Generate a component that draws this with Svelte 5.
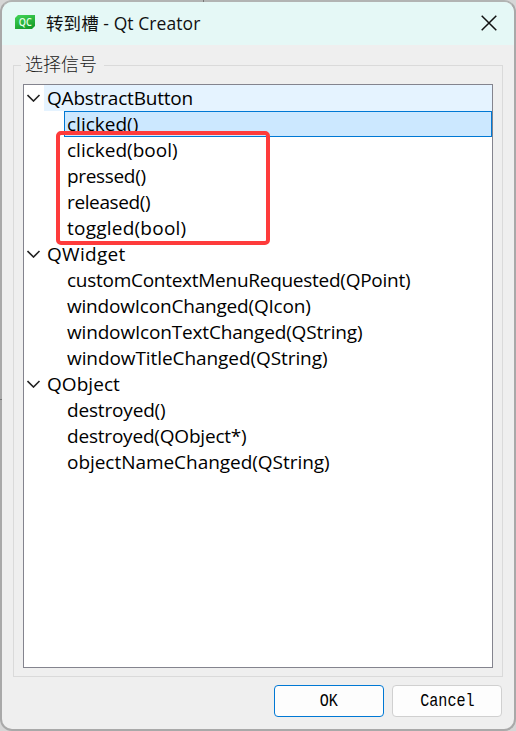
<script lang="ts">
    // spacing is the letter spacing of the label, in px
    type Signal = { name: string; spacing: number };
    type Group = { name: string; spacing: number; signals: Signal[] };

    // Classes and the signals they offer
    const groups: Group[] = [
        {
            name: 'QAbstractButton',
            spacing: -0.2,
            signals: [
                { name: 'clicked()', spacing: 0 },
                { name: 'clicked(bool)', spacing: 0 },
                { name: 'pressed()', spacing: -0.33 },
                { name: 'released()', spacing: -0.38 },
                { name: 'toggled(bool)', spacing: 0.23 }
            ]
        },
        {
            name: 'QWidget',
            spacing: 0.3,
            signals: [
                { name: 'customContextMenuRequested(QPoint)', spacing: -0.27 },
                { name: 'windowIconChanged(QIcon)', spacing: -0.2 },
                { name: 'windowIconTextChanged(QString)', spacing: -0.17 },
                { name: 'windowTitleChanged(QString)', spacing: -0.08 }
            ]
        },
        {
            name: 'QObject',
            spacing: 0.06,
            signals: [
                { name: 'destroyed()', spacing: -0.17 },
                { name: 'destroyed(QObject*)', spacing: -0.2 },
                { name: 'objectNameChanged(QString)', spacing: -0.04 }
            ]
        }
    ];

    let selected: string = $state('clicked()');
    let hovered: string = $state('QAbstractButton');
    let collapsed: Record<string, boolean> = $state({});
</script>

<div class="desktop">
    <div class="dialog">
        <header class="titlebar">
            <svg class="logo" width="20" height="14" viewBox="0 0 20 14">
                <defs>
                    <linearGradient id="green" x1="0" y1="0" x2="0.5" y2="1">
                        <stop offset="0" stop-color="#43d558" />
                        <stop offset="1" stop-color="#17a02c" />
                    </linearGradient>
                </defs>
                <path d="M3 0H20V11L17 14H0V3Z" fill="url(#green)" />
                <text x="10.2" y="11" text-anchor="middle" textLength="13" lengthAdjust="spacingAndGlyphs">QC</text>
            </svg>
            <h1>转到槽 - Qt Creator</h1>
            <button class="close" aria-label="Close">
                <svg width="16" height="16" viewBox="0 0 16 16">
                    <path d="M.7.7 15.3 15.3M15.3.7.7 15.3" />
                </svg>
            </button>
        </header>

        <fieldset>
            <legend>选择信号</legend>
            <div class="tree">
                {#each groups as group}
                    <div class="row parent" class:hovered={hovered === group.name}>
                        <button
                            class="toggle"
                            aria-label={group.name}
                            onclick={() => (collapsed[group.name] = !collapsed[group.name])}
                        >
                            <svg width="14" height="8" viewBox="0 0 14 8">
                                <path d="M.5 1 6.5 7 12.5 1" />
                            </svg>
                        </button>
                        <span class="label" style="letter-spacing: {group.spacing}px">{group.name}</span>
                    </div>
                    {#if !collapsed[group.name]}
                        {#each group.signals as signal}
                            <button
                                class="row child"
                                class:selected={selected === signal.name}
                                style="letter-spacing: {signal.spacing}px"
                                onclick={() => (selected = signal.name)}
                            >
                                {signal.name}
                            </button>
                        {/each}
                    {/if}
                {/each}
                <!-- Marks the remaining button signals -->
                <div class="marker"></div>
            </div>
        </fieldset>

        <footer>
            <button class="action primary"><span>OK</span></button>
            <button class="action"><span>Cancel</span></button>
        </footer>
    </div>
</div>

<style>
    :global(body) {
        margin: 0;
        background: #d6d6d6;
    }

    .desktop {
        position: relative;
        width: 516px;
        height: 731px;
        overflow: hidden;
    }

    /* Edges of the window behind the dialog */
    .desktop::before,
    .desktop::after {
        content: '';
        position: absolute;
        background: #777;
    }

    .desktop::before {
        left: 203px;
        top: 0;
        width: 1px;
        height: 2px;
    }

    .desktop::after {
        left: 0;
        top: 399px;
        width: 2px;
        height: 1px;
    }

    .dialog {
        display: flex;
        flex-direction: column;
        box-sizing: border-box;
        width: 516px;
        height: 731px;
        border: 2px solid #a9a9a9;
        border-top-color: #b2b4b3;
        border-radius: 12px;
        background: #efefef;
        overflow: hidden;
    }

    button {
        margin: 0;
        padding: 0;
        border: 0;
        background: none;
        color: #000;
    }

    .titlebar {
        display: flex;
        align-items: center;
        flex: none;
        height: 43px;
        padding: 0 17px 2px 13px;
        box-sizing: border-box;
        background: #e5f8f6;
    }

    .logo {
        margin-top: -1px;
    }

    .logo text {
        font: 600 10.5px "Open Sans", sans-serif;
        fill: #e6ffe9;
    }

    h1 {
        flex: 1;
        margin: 0 0 0 11px;
        font: 17.5px/26px "Open Sans", "Noto Sans CJK SC", sans-serif;
        letter-spacing: 0.07px;
        color: #111;
        white-space: nowrap;
    }

    .close {
        display: flex;
    }

    .close path {
        fill: none;
        stroke: #111;
        stroke-width: 1.5;
    }

    fieldset {
        flex: none;
        box-sizing: border-box;
        width: 490px;
        height: 623px;
        min-width: 0;
        margin: 9px 0 0 11px;
        padding: 7px 9px 9px;
        border: 1px solid #dadada;
    }

    legend {
        height: 23px;
        margin-left: -2px;
        padding: 0 7px 0 4px;
        font: 300 18px/23px "Liberation Serif", "Noto Sans CJK SC", serif;
        color: #222;
    }

    .tree {
        position: relative;
        box-sizing: border-box;
        width: 470px;
        height: 584px;
        border: 1px solid #84848e;
        background: #fff;
    }

    .row {
        display: flex;
        align-items: center;
        box-sizing: border-box;
        height: 26px;
        font: 19px/26px "Open Sans", sans-serif;
        color: #000;
        white-space: nowrap;
    }

    .toggle {
        display: flex;
        width: 20px;
        padding-left: 3px;
        box-sizing: border-box;
    }

    .toggle path {
        fill: none;
        stroke: #222;
        stroke-width: 1.6;
    }

    .label {
        flex: 1;
        padding-left: 3px;
    }

    .hovered .label {
        background: #e5f3ff;
    }

    .child {
        width: 428px;
        margin-left: 40px;
        padding-left: 2px;
        border: 1px solid transparent;
        text-align: left;
    }

    .selected {
        border-color: #0078d4;
        background: #cce8ff;
    }

    .marker {
        position: absolute;
        left: 32px;
        top: 46px;
        box-sizing: border-box;
        width: 214px;
        height: 114px;
        border: 4px solid #fe3b3b;
        border-radius: 5px;
        pointer-events: none;
    }

    footer {
        display: flex;
        justify-content: flex-end;
        gap: 8px;
        padding: 8px 12px 0 0;
    }

    .action {
        box-sizing: border-box;
        width: 110px;
        height: 32px;
        border: 1px solid #d0d0d0;
        border-radius: 4px;
        background: #fdfdfd;
        font: 18px/30px "Liberation Mono", monospace;
    }

    /* Narrow button face */
    .action span {
        display: inline-block;
        transform: scaleX(0.84);
    }

    .primary {
        border-color: #0078d4;
    }
</style>
